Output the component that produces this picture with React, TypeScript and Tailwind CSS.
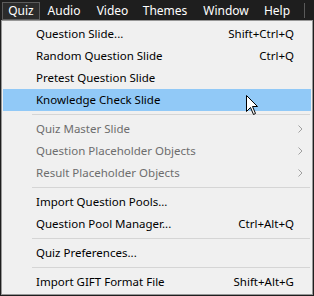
import { ReactNode } from "react";

type Item =
  | { kind: "sep" }
  | {
      kind: "item";
      label: string;
      shortcut?: string;
      disabled?: boolean;
      submenu?: boolean;
      active?: boolean;
    };

const TOP_MENUS = [
  { label: "Quiz", w: "w-[38px]", open: true },
  { label: "Audio", w: "w-[48px]" },
  { label: "Video", w: "w-[49px]" },
  { label: "Themes", w: "w-[56px]" },
  { label: "Window", w: "w-[66px]" },
  { label: "Help", w: "w-[36px]" },
];

const ITEMS: Item[] = [
  { kind: "item", label: "Question Slide...", shortcut: "Shift+Ctrl+Q" },
  { kind: "item", label: "Random Question Slide", shortcut: "Ctrl+Q" },
  { kind: "item", label: "Pretest Question Slide" },
  { kind: "item", label: "Knowledge Check Slide", active: true },
  { kind: "sep" },
  { kind: "item", label: "Quiz Master Slide", disabled: true, submenu: true },
  { kind: "item", label: "Question Placeholder Objects", disabled: true, submenu: true },
  { kind: "item", label: "Result Placeholder Objects", disabled: true, submenu: true },
  { kind: "sep" },
  { kind: "item", label: "Import Question Pools..." },
  { kind: "item", label: "Question Pool Manager...", shortcut: "Ctrl+Alt+Q" },
  { kind: "sep" },
  { kind: "item", label: "Quiz Preferences..." },
  { kind: "sep" },
  { kind: "item", label: "Import GIFT Format File", shortcut: "Shift+Alt+G" },
];

const Chevron = () => (
  <svg width="5" height="8" viewBox="0 0 5 8" className="block">
    <path d="M0.5 0.5 L4 4 L0.5 7.5" fill="none" stroke="#a0a0a0" strokeWidth="1" />
  </svg>
);

const Cursor = () => (
  <svg
    width="13"
    height="21"
    viewBox="0 0 13 21"
    className="absolute left-[246px] top-[95px] pointer-events-none"
  >
    <path
      d="M0.5 0.5 L0.5 16.5 L4.5 12.5 L7.5 19.5 L9.5 18.5 L6.5 11.5 L11.5 11.5 Z"
      fill="#ffffff"
      stroke="#000000"
      strokeWidth="1"
      strokeLinejoin="miter"
    />
  </svg>
);

const MenuRow = ({ item }: { item: Extract<Item, { kind: "item" }> }): ReactNode => (
  <div
    className={`h-[22px] flex items-center ${
      item.active ? "bg-[#91c9f7]" : ""
    } ${item.disabled ? "text-[#6d6d6d]" : "text-black"}`}
  >
    <span className="pl-[33px] flex-1 whitespace-nowrap">{item.label}</span>
    {item.shortcut && (
      <span className="whitespace-nowrap pr-[17px]">{item.shortcut}</span>
    )}
    {item.submenu && (
      <span className="pr-[8px]">
        <Chevron />
      </span>
    )}
  </div>
);

export default function App() {
  return (
    <div
      className="relative w-[314px] h-[296px] bg-[#1e1e1e] overflow-hidden text-[11.5px] leading-none"
      style={{ fontFamily: '"Noto Sans", "Open Sans", sans-serif' }}
    >
      {/* menubar */}
      <div className="h-[20px] flex items-start pt-[2px] pl-[2px] text-[12px]">
        {TOP_MENUS.map((m) => (
          <div
            key={m.label}
            className={`${m.w} h-[18px] flex items-center justify-center text-white ${
              m.open ? "bg-[#2b2b2b] border border-[#5c5c5c]" : ""
            }`}
          >
            {m.label}
          </div>
        ))}
        <div className="ml-[9px] mt-[1px] w-px h-[15px] bg-[#5a5a5a]" />
      </div>

      {/* dropdown */}
      <div className="ml-[1px] w-[312px] bg-[#f0f0f0] border border-[#979797] pt-[2px] px-[1px] pb-[1px]">
        {ITEMS.map((item, i) =>
          item.kind === "sep" ? (
            <div key={i} className="h-[7px] flex items-center pl-[29px] pr-[1px]">
              <div className="h-px w-full bg-[#d5d5d5]" />
            </div>
          ) : (
            <MenuRow key={i} item={item} />
          )
        )}
      </div>

      <Cursor />
    </div>
  );
}
